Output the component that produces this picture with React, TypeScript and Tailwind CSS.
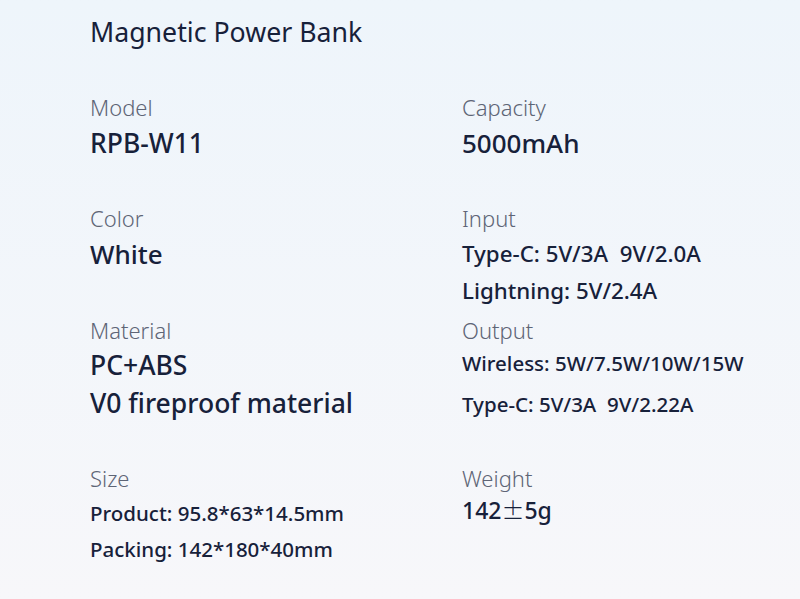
import React from "react";

const font = { fontFamily: '"Noto Sans", "Noto Sans CJK SC", sans-serif' };

function Label({ children }: { children: React.ReactNode }) {
  return <div className="text-[22px] leading-[30px] font-light text-[#5e6576]">{children}</div>;
}

export default function App() {
  return (
    <div
      className="w-[800px] h-[599px] overflow-hidden bg-gradient-to-b from-[#eef5fb] to-[#f7f7fa] text-[#17213a] pl-[90px]"
      style={font}
    >
      <div className="pt-[15px] text-[26.7px] leading-[34px] font-normal">Magnetic Power Bank</div>
      <div className="mt-[43px] grid grid-cols-[372px_1fr] grid-rows-[111px_112px_148px_auto]">
        <div>
          <Label>Model</Label>
          <div className="mt-[3px] text-[26.5px] leading-[36px] font-medium">RPB-W11</div>
        </div>
        <div>
          <Label>Capacity</Label>
          <div className="mt-[3px] text-[26px] leading-[36px] font-medium">5000mAh</div>
        </div>
        <div>
          <Label>Color</Label>
          <div className="mt-[3px] text-[26px] leading-[36px] font-medium">White</div>
        </div>
        <div>
          <Label>Input</Label>
          <div className="mt-[2px] text-[22.3px] leading-[37px] font-medium whitespace-pre">Type-C: 5V/3A  9V/2.0A</div>
          <div className="text-[22.3px] leading-[37px] font-medium">Lightning: 5V/2.4A</div>
        </div>
        <div>
          <Label>Material</Label>
          <div className="mt-[1px] text-[26.5px] leading-[38px] font-medium">PC+ABS</div>
          <div className="text-[26.5px] leading-[38px] font-medium">V0 fireproof material</div>
        </div>
        <div>
          <Label>Output</Label>
          <div className="mt-[0px] text-[20.5px] leading-[36px] font-medium">Wireless: 5W/7.5W/10W/15W</div>
          <div className="mt-[5px] text-[20.5px] leading-[36px] font-medium whitespace-pre">Type-C: 5V/3A  9V/2.22A</div>
        </div>
        <div>
          <Label>Size</Label>
          <div className="mt-[2px] text-[20.5px] leading-[36px] font-medium">Product: 95.8*63*14.5mm</div>
          <div className="text-[20.5px] leading-[36px] font-medium">Packing: 142*180*40mm</div>
        </div>
        <div>
          <Label>Weight</Label>
          <div className="mt-[-1px] text-[23px] leading-[34px] font-medium">
            142<span className="font-light" style={{ fontFamily: '"Noto Sans CJK SC", sans-serif' }}>±</span>5g
          </div>
        </div>
      </div>
    </div>
  );
}
